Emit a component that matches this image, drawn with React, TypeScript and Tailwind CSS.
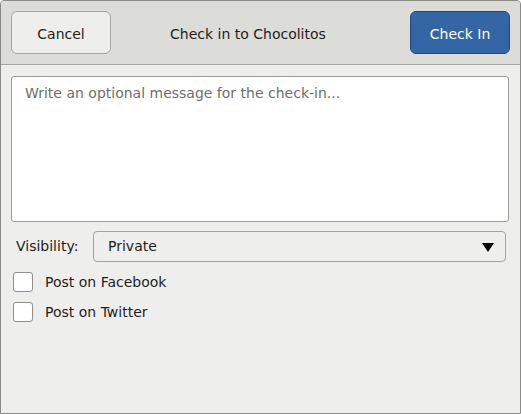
const font = { fontFamily: '"DejaVu Sans", sans-serif' };

function CheckRow({ label }: { label: string }) {
    return (
        <label className="flex items-center h-[20px]">
            <span className="w-[20px] h-[20px] rounded-[3px] border border-[#8f8f8c] bg-white" />
            <span className="ml-[12px] text-[14px] text-[#1e1e1e] leading-[19px]">{label}</span>
        </label>
    );
}

export default function App() {
    return (
        <div
            className="w-[521px] h-[414px] border border-[#8a8a88] rounded-t-[4px] bg-[#eeeeec] flex flex-col overflow-hidden"
            style={font}
        >
            {/* header bar */}
            <div className="h-[64px] shrink-0 bg-[#dcdcd8] border-b border-[#a5a5a2] flex items-start px-[10px] pt-[10px]">
                <button className="w-[100px] h-[43px] pt-[3px] rounded-[6px] border border-[#a4a4a0] bg-[#eeeeec] text-[14px] text-[#1e1e1e]">
                    Cancel
                </button>
                <div className="h-[43px] pt-[3px] flex items-center text-[14px] text-[#1e1e1e] ml-[59px]">
                    Check in to Chocolitos
                </div>
                <div className="flex-1" />
                <button className="w-[100px] h-[43px] pt-[3px] rounded-[6px] border border-[#25497a] bg-[#3465a4] text-[14px] text-white">
                    Check In
                </button>
            </div>

            <div className="flex flex-col px-[10px] pt-[11px]">
                <div className="h-[146px] mr-[1px] rounded-[3px] border border-[#9c9c99] bg-white px-[13px] pt-[6px] text-[14px] text-[#6d6f6d]">
                    Write an optional message for the check-in...
                </div>

                <div className="flex items-center mt-[9px] h-[31px]">
                    <span className="ml-[5px] w-[77px] text-[14px] text-[#1e1e1e]">Visibility:</span>
                    <div className="flex-1 mr-[4px] h-[31px] rounded-[4px] border border-[#a4a4a0] bg-[#eeeeec] flex items-center justify-between pl-[14px] pr-[11px] text-[14px] text-[#1e1e1e]">
                        <span>Private</span>
                        <svg width="12" height="10" viewBox="0 0 12 10">
                            <polygon points="0,1 12,1 6,10" fill="#000" />
                        </svg>
                    </div>
                </div>

                <div className="flex flex-col gap-[10px] mt-[10px] ml-[2px]">
                    <CheckRow label="Post on Facebook" />
                    <CheckRow label="Post on Twitter" />
                </div>
            </div>
        </div>
    );
}
